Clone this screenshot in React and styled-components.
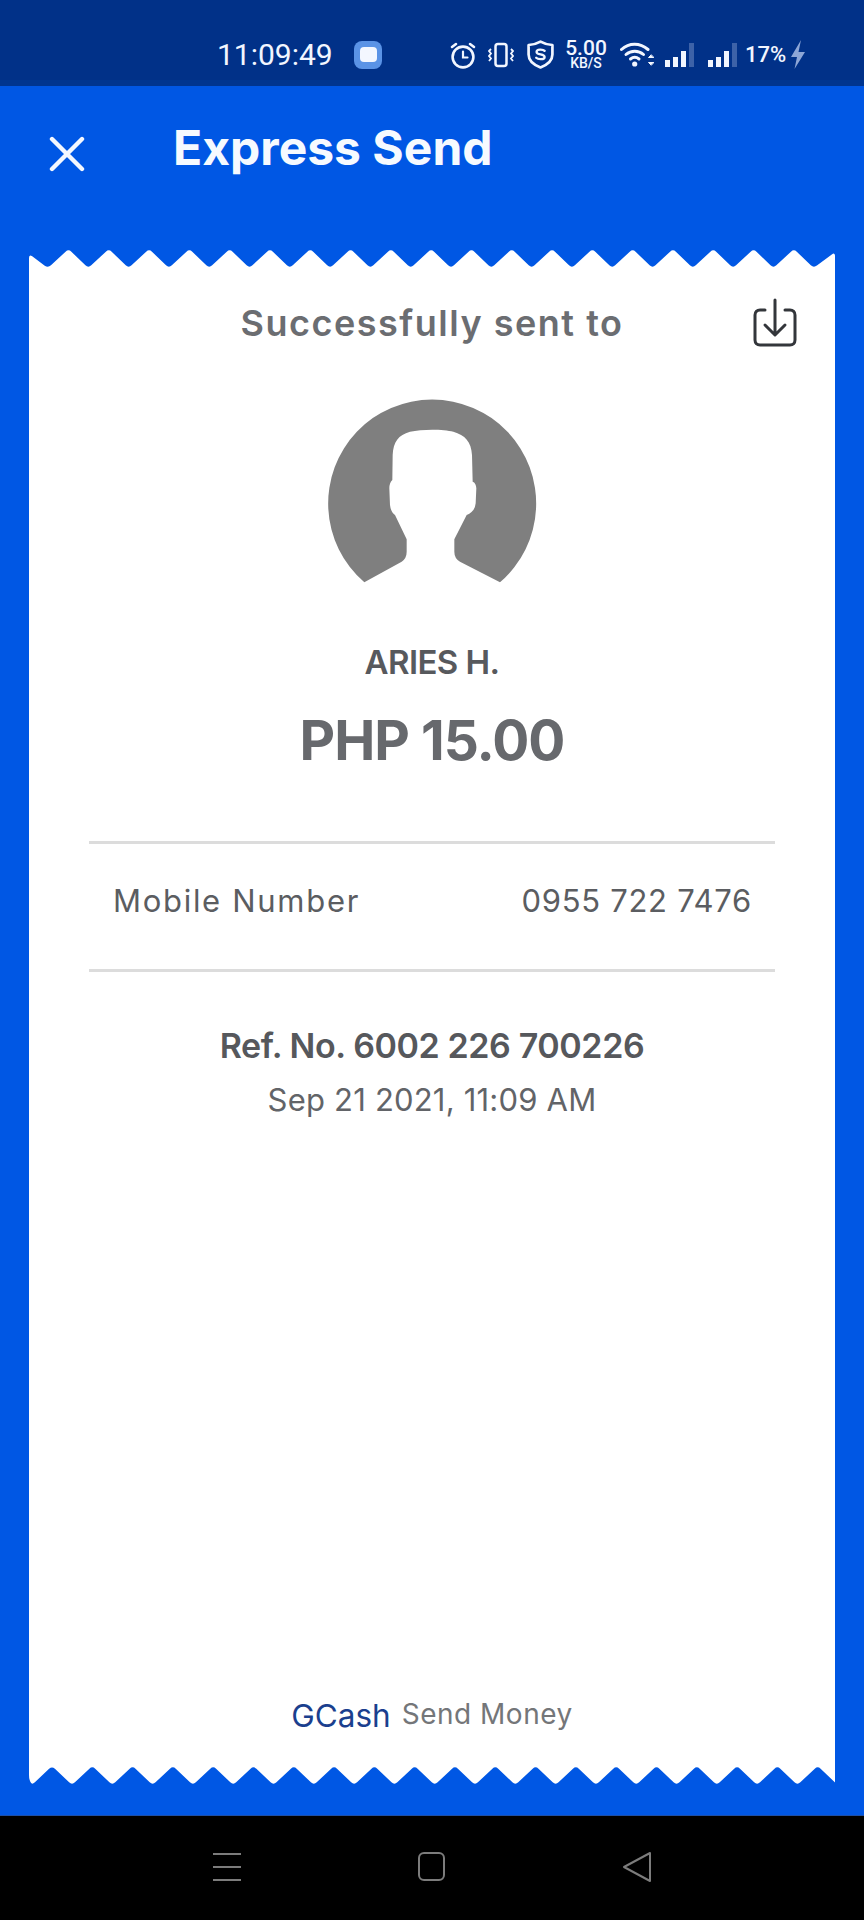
import React from 'react';
import styled, { createGlobalStyle } from 'styled-components';

const GlobalStyle = createGlobalStyle`
  html, body { margin: 0; padding: 0; background: #0057e4; }
  * { box-sizing: border-box; }
`;

// zigzag points of the torn receipt edge, every tip gets rounded off
const edgePoints = (flip) => {
  const step = 40.3;
  const pts = [];
  if (!flip) {
    pts.push([0, 20], [0, 5]);
    for (let k = 0; k < 20; k++) {
      pts.push([19 + k * step, 19]);
      if (k < 19) pts.push([39.5 + k * step, 0]);
    }
    pts.push([806, 3], [806, 20]);
  } else {
    pts.push([0, 0], [0, 13], [3, 19]);
    for (let k = 0; k < 20; k++) {
      pts.push([23 + k * step, 0]);
      pts.push([43 + k * step, 19]);
    }
    pts.push([806, 13], [806, 0]);
  }
  return pts;
};

const edgePath = (flip) => {
  const pts = edgePoints(flip);
  let d = `M${pts[0][0]} ${pts[0][1]}`;
  for (let i = 1; i < pts.length - 1; i++) {
    const [x, y] = pts[i];
    const [px, py] = pts[i - 1];
    const [nx, ny] = pts[i + 1];
    const a = Math.min(4 / Math.hypot(x - px, y - py), 0.4);
    const b = Math.min(4 / Math.hypot(nx - x, ny - y), 0.4);
    d += ` L${x + (px - x) * a} ${y + (py - y) * a}`;
    d += ` Q${x} ${y} ${x + (nx - x) * b} ${y + (ny - y) * b}`;
  }
  const last = pts[pts.length - 1];
  return `${d} L${last[0]} ${last[1]} Z`;
};

const ReceiptEdge = ({ flip }) => (
  <EdgeSvg viewBox="0 0 806 20" width="806" height="20">
    <path d={edgePath(flip)} fill="#fff" />
  </EdgeSvg>
);

const App = () => {
  return (
    <Page>
      <GlobalStyle />
      <StatusBar>
        <Clock>11:09:49</Clock>
        <AppBadge><span /></AppBadge>
        <StatusIcons>
          <svg width="26" height="28" viewBox="0 0 26 28" fill="none" stroke="#f2f6ff" strokeWidth="2.6" strokeLinecap="round">
            <circle cx="13" cy="16" r="10.4" />
            <path d="M13 10.5V16.5H17.5" strokeWidth="2.2" />
            <path d="M2 6L6 3M24 6L20 3" />
          </svg>
          <svg width="26" height="28" viewBox="0 0 26 28" fill="none" stroke="#f2f6ff" strokeWidth="2">
            <rect x="7.5" y="3" width="11" height="22" rx="2.5" strokeWidth="2.5" />
            <path d="M3 8L1 10L3 12.5L1 15L3 17.5L1 20M23 8L25 10L23 12.5L25 15L23 17.5L25 20" strokeWidth="1.8" />
          </svg>
          <ShieldSvg width="27" height="29" viewBox="0 0 26 28" fill="none" stroke="#f2f6ff" strokeWidth="2.6" strokeLinejoin="round">
            <path d="M13 1.5C16.5 3.5 20 4.5 24.5 4.8V14C24.5 20 19.5 24 13 26.5C6.5 24 1.5 20 1.5 14V4.8C6 4.5 9.5 3.5 13 1.5Z" />
            <path d="M17 10.5C15.5 8.8 9.2 8.5 9.2 11.5C9.2 14.8 17 13 17 16.3C17 19.3 10.5 19 8.8 17.2" strokeWidth="2.2" strokeLinecap="round" />
          </ShieldSvg>
          <Speed>
            <SpeedValue>5.00</SpeedValue>
            <SpeedUnit>KB/S</SpeedUnit>
          </Speed>
          <WifiSvg width="34" height="26" viewBox="0 0 34 26" fill="none" stroke="#f2f6ff" strokeWidth="3" strokeLinecap="round">
            <path d="M1.5 7.5C9 0.5 20 0.5 28 7.5" />
            <path d="M6 12.5C11 8 18.5 8 23.5 12.5" />
            <path d="M10.5 17C13 15 16.5 15 19 17" />
            <circle cx="14.7" cy="22" r="2.6" fill="#f2f6ff" stroke="none" />
            <path d="M31 13L28.5 15.5H33.5ZM31 23L28.5 20.5H33.5Z" fill="#f2f6ff" stroke="#f2f6ff" strokeWidth="1" />
          </WifiSvg>
          <Signal />
          <Signal />
          <Battery>17%</Battery>
          <svg width="16" height="30" viewBox="0 0 16 30">
            <path d="M11 0L1 17H7L4.5 29L15 12H8.5Z" fill="#8da6d6" />
          </svg>
        </StatusIcons>
      </StatusBar>

      <Header>
        <CloseButton>
          <svg width="36" height="36" viewBox="0 0 36 36" stroke="#f4f8ff" strokeWidth="4.4" strokeLinecap="round">
            <path d="M3 3L33 33M33 3L3 33" />
          </svg>
        </CloseButton>
        <Title>Express Send</Title>
      </Header>

      <Receipt>
        <ReceiptEdge />
        <ReceiptBody>
          <SentRow>
            <SentLabel>Successfully sent to</SentLabel>
            <DownloadIcon width="46" height="50" viewBox="0 0 46 50" fill="none" stroke="#33363b" strokeWidth="3" strokeLinecap="round" strokeLinejoin="round">
              <path d="M13 12H8C5 12 3 14 3 17V42C3 45 5 47 8 47H38C41 47 43 45 43 42V17C43 14 41 12 38 12H33" />
              <path d="M23 2V36M13 27L23 37L33 27" />
            </DownloadIcon>
          </SentRow>
          <Avatar width="240" height="220" viewBox="0 0 720 660">
            <path
              d="M163 607A312 312 0 1 1 570 607L450 545Q433 535 433 515L433 478L470 405Q495 395 497 370L499 325Q498 308 488 305L486 225C484 185 465 165 430 155C400 147 335 147 300 155C265 165 250 185 248 225L247 300Q238 308 238 325L240 375Q243 398 255 405L290 478L290 515Q290 535 275 545Z"
              fill="#7f7f7f"
            />
          </Avatar>
          <Name>ARIES H.</Name>
          <Amount>PHP 15.00</Amount>
          <DetailRow>
            <DetailText $spacing={1.7}>Mobile Number</DetailText>
            <DetailText $spacing={0.7}>0955 722 7476</DetailText>
          </DetailRow>
          <RefNo>Ref. No. 6002 226 700226</RefNo>
          <DateText>Sep 21 2021, 11:09 AM</DateText>
          <Footer>
            <Brand>GCash</Brand>
            <BrandNote>Send Money</BrandNote>
          </Footer>
        </ReceiptBody>
        <ReceiptEdge flip />
      </Receipt>

      <NavBar>
        <MenuIcon><i /><i /><i /></MenuIcon>
        <HomeIcon />
        <svg width="30" height="32" viewBox="0 0 30 32" fill="none" stroke="#7c7c7c" strokeWidth="2" strokeLinejoin="round">
          <path d="M28 2V30L2 16Z" />
        </svg>
      </NavBar>
    </Page>
  );
};

export default App;

const Signal = () => (
  <SignalWrap>
    <SignalBar $h={7} />
    <SignalBar $h={10} />
    <SignalBar $h={16} />
    <SignalBar $h={24} $dim />
  </SignalWrap>
);

const Page = styled.div`
  width: 864px;
  height: 1920px;
  display: flex;
  flex-direction: column;
  overflow: hidden;
  background: #0057e4;
  font-family: "Inter", "Liberation Sans", sans-serif;
`;

const StatusBar = styled.div`
  height: 86px;
  flex: none;
  display: flex;
  align-items: center;
  padding: 29px 0 0 217px;
  background: #013188;
  border-bottom: 6px solid #00358f;
`;

const Clock = styled.div`
  font-family: "Roboto", sans-serif;
  font-size: 30px;
  line-height: 36px;
  color: #f2f6ff;
  width: 137px;
`;

const AppBadge = styled.div`
  width: 28px;
  height: 28px;
  border-radius: 8px;
  background: #5a93e6;
  display: flex;
  align-items: center;
  justify-content: center;

  span {
    width: 17px;
    height: 15px;
    border-radius: 4px;
    background: #f3f7ff;
  }
`;

const StatusIcons = styled.div`
  display: flex;
  align-items: center;
  margin-left: 68px;
  gap: 12px;
`;

const ShieldSvg = styled.svg`
  margin-left: 1px;
`;

const Speed = styled.div`
  display: flex;
  flex-direction: column;
  align-items: center;
  width: 40px;
  color: #f2f6ff;
  font-family: "Roboto", sans-serif;
  font-weight: 500;
`;

const SpeedValue = styled.span`
  font-size: 21px;
  line-height: 17px;
`;

const SpeedUnit = styled.span`
  font-size: 14px;
  line-height: 12px;
`;

const WifiSvg = styled.svg`
  margin-left: 2px;
  margin-right: -1px;
`;

const SignalWrap = styled.div`
  display: flex;
  align-items: flex-end;
  gap: 3px;
  height: 24px;
  margin-right: 2px;
`;

const SignalBar = styled.span`
  width: 5px;
  height: ${(p) => p.$h}px;
  background: ${(p) => (p.$dim ? '#3d62a8' : '#f2f6ff')};
`;

const Battery = styled.span`
  font-family: "Roboto", sans-serif;
  font-size: 22px;
  font-weight: 500;
  color: #f2f6ff;
  margin-left: -6px;
  margin-right: -8px;
`;

const Header = styled.div`
  height: 163px;
  flex: none;
  display: flex;
  align-items: flex-start;
  padding: 34px 0 0 49px;
  color: #fff;
`;

const CloseButton = styled.div`
  width: 36px;
  height: 36px;
  margin-top: 16px;
`;

const Title = styled.h1`
  margin: 11px 0 0 88px;
  font-family: "Inter", sans-serif;
  font-size: 48px;
  line-height: 34px;
  font-weight: 700;
  letter-spacing: 0;
  color: #f6faff;
`;

const Receipt = styled.div`
  width: 806px;
  margin-left: 29px;
  height: 1537px;
  flex: none;
  display: flex;
  flex-direction: column;
`;

const EdgeSvg = styled.svg`
  display: block;
  flex: none;
`;

const ReceiptBody = styled.div`
  flex: 1;
  min-height: 0;
  background: #fff;
  display: flex;
  flex-direction: column;
  align-items: center;
  padding: 29px 60px 0;
`;

const SentRow = styled.div`
  width: 100%;
  position: relative;
  display: flex;
  justify-content: center;
  height: 50px;
`;

const SentLabel = styled.div`
  font-size: 36px;
  line-height: 50px;
  font-weight: 600;
  letter-spacing: 1.5px;
  color: #6b6d71;
`;

const DownloadIcon = styled.svg`
  position: absolute;
  right: -23px;
  top: 0;
`;

const Avatar = styled.svg`
  display: block;
  flex: none;
  margin: 32px 5px 0 0;
`;

const Name = styled.div`
  margin-top: 40px;
  font-size: 33px;
  line-height: 44px;
  font-weight: 600;
  color: #57595d;
  letter-spacing: -0.6px;
`;

const Amount = styled.div`
  margin-top: 22px;
  font-size: 55px;
  line-height: 68px;
  font-weight: 700;
  letter-spacing: -1px;
  color: #67696d;
`;

const DetailRow = styled.div`
  width: 686px;
  margin-top: 67px;
  height: 131px;
  padding: 0 23px 12px 24px;
  display: flex;
  align-items: center;
  justify-content: space-between;
  border-top: 3px solid #dcdcdc;
  border-bottom: 3px solid #dcdcdc;
`;

const DetailText = styled.span`
  font-size: 31px;
  font-weight: 400;
  letter-spacing: ${(p) => p.$spacing}px;
  color: #5b5d61;
`;

const RefNo = styled.div`
  margin-top: 52px;
  font-size: 34px;
  line-height: 44px;
  font-weight: 600;
  letter-spacing: -0.4px;
  color: #56585c;
`;

const DateText = styled.div`
  margin-top: 10px;
  font-size: 31px;
  line-height: 44px;
  font-weight: 400;
  letter-spacing: 0.2px;
  color: #626468;
`;

const Footer = styled.div`
  margin-top: auto;
  margin-bottom: 31px;
  display: flex;
  align-items: baseline;
  gap: 11px;
`;

const Brand = styled.span`
  font-size: 31.5px;
  font-weight: 400;
  color: #1b3f8e;
`;

const BrandNote = styled.span`
  font-size: 28px;
  font-weight: 400;
  letter-spacing: 0.5px;
  color: #747679;
  position: relative;
  top: -3px;
`;

const NavBar = styled.div`
  margin-top: 29px;
  flex: 1;
  background: #000;
  border-top: 1px solid #1c4fa8;
  display: flex;
  align-items: center;
  justify-content: center;
  gap: 177px;
  padding-bottom: 3px;
`;

const MenuIcon = styled.div`
  width: 28px;
  height: 28px;
  display: flex;
  flex-direction: column;
  justify-content: space-between;

  i {
    display: block;
    height: 2px;
    background: #7c7c7c;
  }
`;

const HomeIcon = styled.div`
  width: 27px;
  height: 29px;
  border: 2px solid #7c7c7c;
  border-radius: 6px;
`;
